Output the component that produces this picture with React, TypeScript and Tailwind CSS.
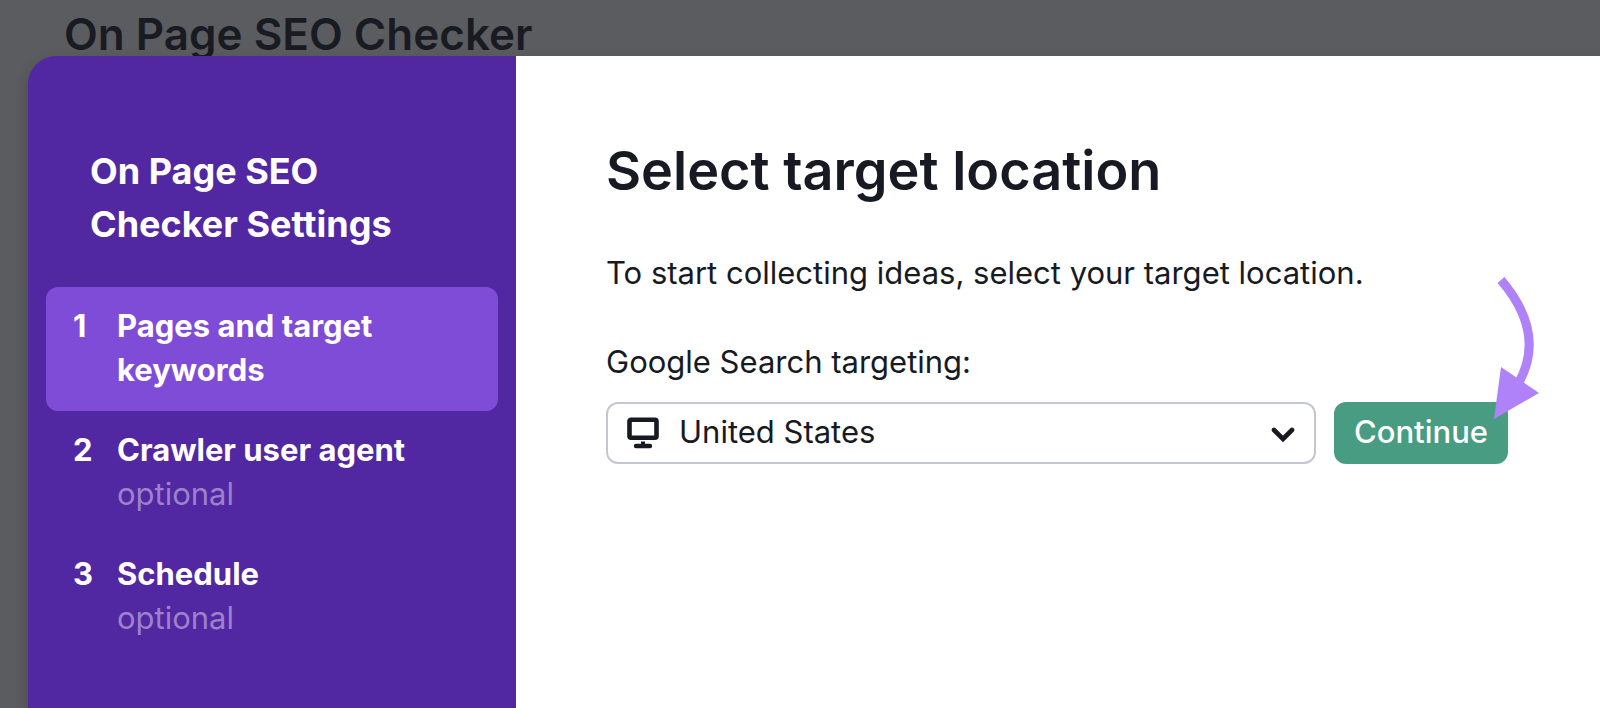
import { useState } from "react";

const steps = [
    { title: "Pages and target keywords", optional: false },
    { title: "Crawler user agent", optional: true },
    { title: "Schedule", optional: true },
];

function Sidebar() {

    const [active, setActive] = useState(0);

    return (
        <aside className="w-[488px] shrink-0 bg-[#5227a2] text-white px-[18px] pt-[89px]">
            <h2 className="pl-11 pr-16 text-[36px] leading-[53px] font-bold">On Page SEO Checker Settings</h2>
            <ol className="mt-9">
                {steps.map((step, index) => (
                    <li key={step.title}>
                        <button
                            type="button"
                            onClick={() => setActive(index)}
                            className={`flex w-full h-[124px] items-start rounded-xl px-[27px] pt-[17px] text-left text-[31px] leading-[44px] ${index === active ? "bg-[#7f4cd8]" : ""}`}
                        >
                            <span className="w-11 shrink-0 font-bold">{index + 1}</span>
                            <span className="max-w-[300px]">
                                <span className="block font-bold">{step.title}</span>
                                {step.optional && <span className="block text-[#9c81cb]">optional</span>}
                            </span>
                        </button>
                    </li>
                ))}
            </ol>
        </aside>
    )
}

function LocationForm() {
    return (
        <section className="flex-1 bg-white pl-[90px] pr-[92px] pt-[80px] text-[#171a22]">
            <h3 className="text-[54px] leading-[70px] font-semibold">Select target location</h3>
            <p className="mt-[45px] text-[31px] leading-[44px]">To start collecting ideas, select your target location.</p>
            <form onSubmit={(e) => e.preventDefault()}>
                <label htmlFor="location" className="mt-[45px] block text-[31px] leading-[44px]">Google Search targeting:</label>
                <div className="mt-[18px] flex gap-[18px]">
                    <div className="relative flex-1">
                        <svg className="pointer-events-none absolute left-[21px] top-[15px] w-8 h-8" viewBox="0 0 32 32" fill="none" aria-hidden="true">
                            <rect x="2.5" y="2.8" width="27" height="18" rx="1.5" stroke="currentColor" strokeWidth="4.6" />
                            <path d="M14 24.500h4v4h-4z" fill="currentColor" />
                            <path d="M9 29h14" stroke="currentColor" strokeWidth="4.4" strokeLinecap="round" />
                        </svg>
                        <select id="location" className="h-[62px] w-full appearance-none rounded-xl border-2 border-[#c4c7cf] bg-transparent pl-[71px] pr-16 pb-0.5 text-[31px]">
                            <option>United States</option>
                        </select>
                        <svg className="pointer-events-none absolute right-[21px] top-[25px] w-6 h-4" viewBox="0 0 24 16" fill="none" aria-hidden="true">
                            <path d="M3 3l9 9 9-9" stroke="currentColor" strokeWidth="4.6" strokeLinecap="round" />
                        </svg>
                    </div>
                    <div className="relative shrink-0">
                        <button type="submit" className="h-[62px] rounded-xl bg-[#479c82] px-5 pb-0.5 text-[31px] font-medium text-white">Continue</button>
                        {/* callout arrow pointing at the button */}
                        <svg className="pointer-events-none absolute -right-8 -top-32 w-12 h-[146px]" viewBox="0 0 48 146" fill="none" aria-hidden="true">
                            <path d="M9 6Q55 60 26 110" stroke="#b082fa" strokeWidth="9" />
                            <path d="M9 93L47 119L2 145Z" fill="#b082fa" />
                        </svg>
                    </div>
                </div>
            </form>
        </section>
    )
}

export default function App() {
    return (
        <div className="flex min-h-screen flex-col overflow-hidden bg-[#5b5c60] font-['Inter','Liberation_Sans',sans-serif]">
            <header className="h-14 pl-16 pt-1">
                <h1 className="text-[44px] leading-[60px] font-semibold text-[#181b22]">On Page SEO Checker</h1>
            </header>
            <main className="relative ml-7 flex flex-1 overflow-hidden rounded-tl-[28px] shadow-[0_6px_14px_rgba(0,0,0,0.2)]">
                <Sidebar />
                <LocationForm />
            </main>
        </div>
    )
}
